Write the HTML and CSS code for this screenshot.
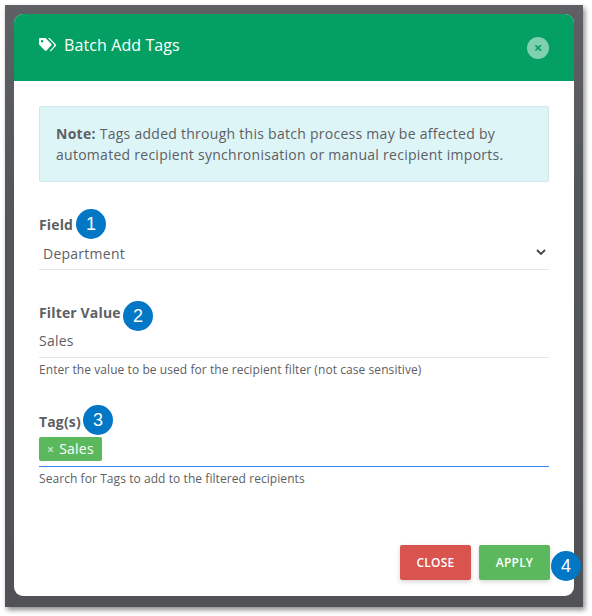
FILE: index.html
```html
<!doctype html>
<html lang="en">
<head>
    <meta charset="utf-8"/>
    <title>Batch Add Tags</title>
    <link rel="stylesheet" href="styles.css">
</head>
<body>
    <div class="backdrop">
        <div class="modal">
            <div class="modal-header">
                <h1>
                    <svg class="tags-icon" viewBox="0 0 17 14" width="17" height="14">
                        <path fill="#fff" d="M0 1.300C0 .5.5 0 1.300 0h4.700c.4 0 .7.1 1 .4l5.200 5.400c.5.5.5 1.300 0 1.800l-4.600 4.900c-.5.5-1.300.5-1.800 0L.5 7.100C.2 6.800 0 6.400 0 6zM3.100 2a1.200 1.200 0 1 0 0 2.400A1.200 1.200 0 0 0 3.100 2z"/>
                        <path fill="#fff" d="M9 0h1.100c.4 0 .7.1 1 .4l5.400 5.700c.6.6.6 1.500 0 2.100l-4.400 4.900c-.4.4-1 .4-1.400 0l4.100-4.800c.7-.7.7-1.600 0-2.300z"/>
                    </svg>
                    Batch Add Tags
                </h1>
                <button class="close-x">&times;</button>
            </div>

            <div class="modal-body">
                <div class="alert">
                    <b>Note:</b> Tags added through this batch process may be affected by automated recipient synchronisation or manual recipient imports.
                </div>

                <div class="field field-select">
                    <label>Field</label>
                    <div class="input select">
                        <span>Department</span>
                        <svg viewBox="0 0 10 6" width="10" height="6"><path d="M1 1l4 4 4-4" fill="none" stroke="#444" stroke-width="1.800"/></svg>
                    </div>
                </div>

                <div class="field field-filter">
                    <label>Filter Value</label>
                    <div class="input">Sales</div>
                    <small>Enter the value to be used for the recipient filter (not case sensitive)</small>
                </div>

                <div class="field field-tags">
                    <label>Tag(s)</label>
                    <div class="input tags">
                        <span class="chip"><i>&times;</i>Sales</span>
                    </div>
                    <small>Search for Tags to add to the filtered recipients</small>
                </div>
            </div>

            <div class="modal-footer">
                <button class="btn red">Close</button>
                <button class="btn green">Apply</button>
            </div>
        </div>

        <span class="badge b1">1</span>
        <span class="badge b2">2</span>
        <span class="badge b3">3</span>
        <span class="badge b4">4</span>
    </div>
</body>
</html>
```
FILE: styles.css
```css
html, body {
    margin: 0;
    background: #fff;
}
body {
    width: 592px;
    height: 616px;
    overflow: hidden;
    font-family: "Open Sans", sans-serif;
    color: #5d6063;
}
.backdrop {
    position: relative;
    box-sizing: border-box;
    width: 578px;
    height: 602px;
    margin: 5px 0 0 5px;
    padding: 9px 9px 11px 9px;
    background: linear-gradient(#5e6063, #54575a 30%, #505255);
    box-shadow: 2px 3px 5px rgba(0,0,0,0.45);
}
.modal {
    display: flex;
    flex-direction: column;
    height: 582px;
    background: #fff;
    border-radius: 9px;
    overflow: hidden;
}
.modal-header {
    display: flex;
    justify-content: space-between;
    box-sizing: border-box;
    height: 67px;
    padding: 22px 25px 0 25px;
    background: #049f62;
}
.modal-header h1 {
    display: flex;
    align-items: center;
    gap: 8px;
    height: 18px;
    margin: 0;
    font-size: 16px;
    font-weight: 400;
    letter-spacing: 0.1px;
    color: #fff;
}
.tags-icon {
    margin-top: 0;
}
.close-x {
    width: 22px;
    height: 22px;
    margin: 1px 0 0 0;
    padding: 0 0 2px 0;
    border: none;
    border-radius: 50%;
    background: #80cfb0;
    color: #049f62;
    font-family: "Open Sans", sans-serif;
    font-size: 15px;
    font-weight: 700;
    line-height: 20px;
}
.modal-body {
    flex: 1;
    padding: 25px 25px 0 25px;
}
.alert {
    box-sizing: border-box;
    height: 76px;
    padding: 16px;
    background: #def5f8;
    border: 1px solid #cfe6ea;
    border-radius: 2px;
    font-size: 14px;
    line-height: 21px;
    letter-spacing: 0.27px;
}
.field label {
    display: block;
    font-size: 14px;
    font-weight: 700;
    line-height: 20px;
    letter-spacing: 0.15px;
}
.field-select {
    margin-top: 33px;
}
.field-filter {
    margin-top: 33px;
}
.field-tags {
    margin-top: 33px;
}
.input {
    box-sizing: border-box;
    border-bottom: 1px solid #e3e5e6;
    font-size: 14px;
    line-height: 21px;
    letter-spacing: 0.25px;
}
.field-select .input {
    height: 35px;
    padding-top: 8px;
}
.field-filter .input {
    height: 35px;
    padding-top: 7px;
}
.select {
    display: flex;
    justify-content: space-between;
    padding-left: 4px;
    padding-right: 3px;
}
.select svg {
    margin-top: 6px;
}
.tags {
    height: 35px;
    padding-top: 5px;
    border-bottom: 1px solid #4285f4;
}
.chip {
    display: inline-block;
    height: 24px;
    padding: 0 8px;
    background: #5cb85c;
    border-radius: 2px;
    color: #fff;
    line-height: 24px;
}
.chip i {
    margin-right: 5px;
    font-style: normal;
    font-weight: 700;
    font-size: 12px;
    color: #bfe3bf;
}
small {
    display: block;
    margin-top: 3px;
    font-size: 12px;
    line-height: 18px;
    letter-spacing: 0.07px;
}
.modal-footer {
    display: flex;
    justify-content: flex-end;
    gap: 8px;
    padding: 0 24px 16px 0;
}
.btn {
    width: 71px;
    height: 35px;
    padding: 0;
    border: none;
    border-radius: 2px;
    color: #fff;
    font-family: "Open Sans", sans-serif;
    font-size: 12px;
    font-weight: 600;
    letter-spacing: 0.2px;
    text-transform: uppercase;
    box-shadow: 0 2px 5px rgba(0,0,0,0.16);
}
.red {
    background: #d9534f;
}
.green {
    background: #5cb85c;
}
.badge {
    position: absolute;
    width: 30px;
    height: 30px;
    border-radius: 50%;
    background: #0277c6;
    color: #fff;
    font-family: "Liberation Sans", sans-serif;
    font-size: 18px;
    line-height: 30px;
    text-align: center;
}
.b1 { left: 71px; top: 204px; }
.b2 { left: 118px; top: 296px; }
.b3 { left: 78px; top: 400px; }
.b4 { left: 546px; top: 546px; }
```
